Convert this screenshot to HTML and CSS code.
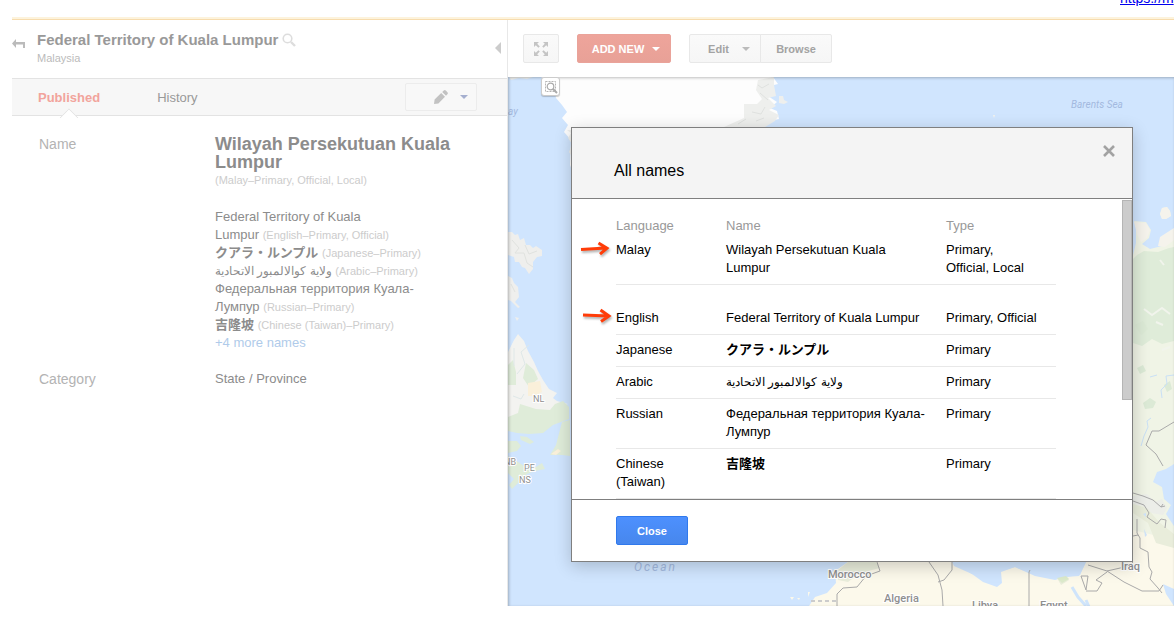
FILE: index.html
```html
<!DOCTYPE html>
<html lang="en">
  <head>
    <meta charset="utf-8">
    <title>Federal Territory of Kuala Lumpur</title>
    <link rel="stylesheet" href="styles.css">
  </head>
  <body>
    <div class="top-strip">
      <a href="#">https://m</a>
    </div>

    <div class="app">
      <aside class="sidebar">
        <div class="place-header">
          <button class="icon-btn back" aria-label="Back">
            <svg width="14" height="12" viewBox="0 0 14 12"><path d="M0 5.500L4 1v3h9v6h-2V6.500H4V10z" fill="#bbb" /></svg>
          </button>
          <div class="place-title">
            <h1>
              Federal Territory of Kuala Lumpur
              <svg width="14" height="14" viewBox="0 0 14 14"><circle cx="5.500" cy="5.500" r="4.300" fill="none" stroke="#ddd" stroke-width="1.600" /><path d="M9 9l4 4" stroke="#ddd" stroke-width="2.400" /></svg>
            </h1>
            <p>Malaysia</p>
          </div>
          <button class="icon-btn collapse" aria-label="Collapse panel">
            <svg width="6" height="12" viewBox="0 0 6 12"><path d="M6 0v12L0 6z" fill="#ccc" /></svg>
          </button>
        </div>

        <nav class="tabs">
          <a class="tab active" href="#">Published</a>
          <a class="tab" href="#">History</a>
          <button class="edit-menu" aria-label="Edit place">
            <svg width="14" height="14" viewBox="0 0 14 14"><path d="M0 14l.6-4.400L7.200 3l3.800 3.800L4.400 13.400zM8.200 2L9.800.6q1-1 2 0L13.400 2.200q1 1 0 2L12 5.800z" fill="#c2c2c2" /></svg>
            <span class="caret blue"></span>
          </button>
        </nav>

        <dl class="details">
          <dt>Name</dt>
          <dd>
            <h2>Wilayah Persekutuan Kuala Lumpur</h2>
            <p class="primary-note"><small>(Malay–Primary, Official, Local)</small></p>
            <ul>
              <li>Federal Territory of Kuala Lumpur&nbsp;<small>(English–Primary, Official)</small></li>
              <li><span class="cjk" lang="ja">クアラ・ルンプル</span> <small>(Japanese–Primary)</small></li>
              <li><span class="arabic" lang="ar">ولاية كوالالمبور الاتحادية</span> <small>(Arabic–Primary)</small></li>
              <li>Федеральная территория Куала-Лумпур&nbsp;<small>(Russian–Primary)</small></li>
              <li><span class="cjk" lang="zh-TW">吉隆坡</span> <small>(Chinese (Taiwan)–Primary)</small></li>
            </ul>
            <a href="#">+4 more names</a>
          </dd>
          <dt>Category</dt>
          <dd>State / Province</dd>
        </dl>
      </aside>

      <main class="map-pane">
        <div class="toolbar">
          <button class="btn square" aria-label="Full screen">
            <svg width="14" height="14" viewBox="0 0 14 14"><path d="M0 0h5L3.200 1.800 5.800 4.400 4.400 5.800 1.800 3.200 0 5zM14 0v5l-1.800-1.800L9.600 5.800 8.200 4.400l2.600-2.600L9 0zM0 14V9l1.800 1.800L4.400 8.200l1.400 1.400-2.600 2.600L5 14zM14 14H9l1.800-1.800L8.200 9.600l1.400-1.400 2.600 2.600L14 9z" fill="#c4c4c4" /></svg>
          </button>
          <button class="btn add">ADD NEW <span class="caret"></span></button>
          <div class="btn-group">
            <button class="btn">Edit <span class="caret"></span></button>
            <button class="btn">Browse</button>
          </div>
        </div>

        <div class="map">
          <svg class="map-art" viewBox="508 77 666 529" preserveAspectRatio="xMinYMin slice">
            <rect x="508" y="77" width="666" height="529" fill="#d0e5fe" />

            <!-- Greenland -->
            <path d="M541 77L553 85 556 98 562 105 567 112 562 118 568 125 564 132 571 140 570 165 574 175H640L700 135 735 130 744 125 752 128 763 127 770 121 779 119 777 111 770 108 777 102 768 96 774 91 770 86 778 84 773 77z" fill="#fdfdfd" />
            <path d="M758 80L774 77 774 85 776 96 768 98 776 106 769 110 779 115 775 121 765 127H724L744 118V104H757L762 99 756 90zM779 96l4 0 1 4 4 2-4 2-5-1z" fill="#eeefed" />
            <path d="M758 85l4 3 7-4M760 93l8 7M752 112l9 2 4-7M738 124l8-5M756 121l8-3" fill="none" stroke="#dfe1df" />
            <path d="M509 77h24l-6 2-8-1-8 2zM567 130l4 3-3 5 4 6-3 8 5 8-1 14 2 4V130z" fill="#eeefed" />

            <!-- Baffin and Labrador -->
            <path d="M508 232l4 0 3 3 3-1 2 6 4-2 2 7 4 0 3 3 3-2 6 4 0 6-5 1-4 5 0 7-4 5-4-6-3-1-3-5-4 0-1-5-6-2zM508 276l4 2 2 5 4 4 1 10-4 5 5 5-2 1-7-7-3-1zM515 317l4 1-2 3z" fill="#efefed" />
            <path d="M512 240l7 8-4 5 9 0 3 10 6 4M525 245l4 9 8-3M511 284l4 8" fill="none" stroke="#e0e2df" />
            <path d="M508 352L514 340 518 334 524 341 528 351 534 362 538 371 543 380 549 389 557 393 553 398 557 401 568 404 560 407 565 410 549 414 536 413 528 422 508 427z" fill="#f3f3f0" />
            <path d="M508 365l5-5 3 12 0 13-8 0zM526 363l8 7 4 9-6 5 -3 3-6-9zM520 404l16 5 14 1 5-6 8-3 6 6 0 12-16 6-10 8-14 1-12-1-9-2v-14l10-4zM508 441l9 0 4 5-4 5-9 2zM520 436l7 1 7 5-4 2-9-4zM562 422l8-2v36l-8-1-12 0 6-10zM508 456l10 6 9 6 9-1 6-4 3 6-10 2-8 3-9 9-6 6-3-4 5-6-6-6z" fill="#dfecd9" />
            <path d="M528 383l12-2 2 11-8 4-6 0zM551 454l7-5 3 2-5 4z" fill="#faf0da" />
            <path d="M513 396l8 3 3-5M529 345l-8 7 4 12-8 10M514 348v18" fill="none" stroke="#dfe8e8" />

            <!-- Northern Russia down to the Caspian -->
            <path d="M1134 221l12 1 5 8-2 8-7 6 8 5 12-3-1-6 13-9V606H1133V255l3-12 0-16zM1160 214l2-6 5-1 3 4 1 5-5 3-4 0z" fill="#f0f4e6" />
            <path d="M1134 222l12 1 4 7-3 8-6 4-4-8zM1158 246l2-9 14-9v12l-9 7zM1160 214l2-6 5-1 3 4 1 5-5 3-4 0zM993 115l2 0-1 3z" fill="#f5f3ec" />
            <path d="M1137 255l7-4 14 1 11-4 5-1v94l-12 3-10-5-10 7-9-3V259z" fill="#dfecd9" />
            <path d="M1144 309l8 6 10-7 8 6M1156 322l7 3M1160 260l4 5M1162 350l8-3" fill="none" stroke="#f1f4ec" stroke-width="2" />
            <path d="M1135 325l8-4 5 8-7 6zM1143 403l7-5 6 4-3 6-8 1zM1137 368l6-3 3 6-6 3zM1164 385l6-4 2 8-5 3z" fill="#dcead6" />
            <path d="M1141 446l3-10 4-9-1-6 4-3M1162 398l-1-8 6-6-1-8 8-1M1150 377l7-2" fill="none" stroke="#c9e0f6" />
            <path d="M1174 464l-8 5-9 3-4 10 9 5 2 12 7 6-5 9 8 12z" fill="#d0e5fe" />
            <path d="M1133 496l14-2 8 8 7-3 5 9-4 7-12-2-10-8-8 2z" fill="#eceee9" />

            <!-- North Africa and the Middle East -->
            <path d="M809 606l6-9 12-4 9-10-1-12 13-9H952L972 574 999 584 1001 571 1015 567 1035 576 1055 580 1065 577 1080 575 1086 562 1133 530 1174 540V606z" fill="#fcf9eb" />
            <path d="M838 570l10-8h28l4 6-20 5-12 9-10-2zM1057 578l9-2 3 4-8 5zM1133 504l14 4 12 14 15 12v14l-18-5-8-20-15-10z" fill="#e9eddb" />
            <path d="M952 562h134l-1 2-6 12-14 1-10 2-20-4-20-8-14 5 1 11-5 4-14-5-11-8-18-8z" fill="#d0e5fe" />
            <path d="M1057 578l9-2 3 3-7 4z" fill="#dceacb" />
            <path d="M1072 587l6 10 8 9M1086 600l3 7" fill="none" stroke="#cfe4fb" stroke-width="3" />
            <path d="M1163 584l11 5v17l-8-12z" fill="#d0e5fe" />
            <path d="M790 597l4 0-2 3zM797 598l3 0-1 2zM808 592l2 0-2 5z" fill="#fcf9eb" />
            <path d="M1144 529l3 6-2 2zM1143 514l3-1 0 4z" fill="#cfe4fb" />
            <g fill="none" stroke="#aaa">
              <path d="M877 562l3 9-14 5-9 11-14 1-6 6v12M929 562l9 13 4 15 1 16M938 582l6-2 8-10v-8M1029 606v-34l1-2M1133 493l10 3 10 4 8 7 4-1M1133 501l11 4 5 8-2 4 10 7 4-5 5 1-1 8M1137 519v14l3 5 0 10 8 4 1 15 3 5-2 7 8 9 4 5M1088 565l19 6 22-5 4-4M1107 571l17 11 18 9h17l4-6M1081 576l5 14 2-14zM1086 591h11l5-8-6-3 11-8M1174 422l-15 9-7 0-6 14 10 9 7 12M1133 536l5-1M1161 507l2-3" />
              <path d="M811 601h25" stroke="#ccc" stroke-width="2" stroke-dasharray="4 3" />
            </g>

            <g class="sea">
              <text x="508" y="115">ay</text>
              <text x="1071" y="108">Barents Sea</text>
              <text class="ocean" x="634" y="571">Ocean</text>
            </g>
            <g class="province">
              <text x="533" y="402">NL</text>
              <text x="504" y="465">NB</text>
              <text x="524" y="471">PE</text>
              <text x="519" y="483">NS</text>
            </g>
            <g class="country">
              <text x="828" y="578">Morocco</text>
              <text x="884" y="602">Algeria</text>
              <text x="972" y="609">Libya</text>
              <text x="1040" y="609">Egypt</text>
              <text x="1121" y="570">Iraq</text>
            </g>
          </svg>
          <button class="map-zoom" aria-label="Zoom to area">
            <svg width="14" height="14" viewBox="0 0 14 14"><path d="M1.500 1.500h10v10h-10z" fill="none" stroke="#b5b5b5" stroke-dasharray="2 1" /><circle cx="6.500" cy="6.500" r="3.300" fill="#fff" stroke="#aaa" stroke-width="1.200" /><path d="M9 9l4 4" stroke="#aaa" stroke-width="2" /></svg>
          </button>
        </div>
      </main>

      <section class="modal" role="dialog" aria-labelledby="modalTitle">
        <header class="modal-header">
          <h2 id="modalTitle">All names</h2>
          <button class="modal-x" aria-label="Close dialog">
            <svg width="12" height="12" viewBox="0 0 12 12"><path d="M1 1l10 10M11 1L1 11" stroke="#a2a2a2" stroke-width="2.600" /></svg>
          </button>
        </header>
        <div class="modal-body">
          <table>
            <thead>
              <tr><th class="lang">Language</th><th class="name">Name</th><th>Type</th></tr>
            </thead>
            <tbody>
              <tr>
                <td>
                  <svg class="pointer" width="30" height="18" viewBox="0 0 30 18"><path d="M1 9.500L26 8M18.500 3L27 8.200 20 14.200" fill="none" stroke="#ff3c08" stroke-width="3" /></svg>
                  Malay
                </td>
                <td>Wilayah Persekutuan Kuala Lumpur</td>
                <td>Primary,<br>Official, Local</td>
              </tr>
              <tr class="spaced">
                <td>
                  <svg class="pointer second" width="30" height="18" viewBox="0 0 30 18"><path d="M1 8L26 9M18.500 3L27 9 19 14.500" fill="none" stroke="#ff3c08" stroke-width="3" /></svg>
                  English
                </td>
                <td>Federal Territory of Kuala Lumpur</td>
                <td>Primary, Official</td>
              </tr>
              <tr>
                <td>Japanese</td>
                <td><span class="cjk" lang="ja">クアラ・ルンプル</span></td>
                <td>Primary</td>
              </tr>
              <tr>
                <td>Arabic</td>
                <td><span class="arabic" lang="ar">ولاية كوالالمبور الاتحادية</span></td>
                <td>Primary</td>
              </tr>
              <tr>
                <td>Russian</td>
                <td>Федеральная территория Куала-Лумпур</td>
                <td>Primary</td>
              </tr>
              <tr>
                <td>Chinese (Taiwan)</td>
                <td><span class="cjk" lang="zh-TW">吉隆坡</span></td>
                <td>Primary</td>
              </tr>
            </tbody>
          </table>
          <div class="scroll-thumb"></div>
        </div>
        <footer class="modal-footer">
          <button class="btn close">Close</button>
        </footer>
      </section>
    </div>
  </body>
</html>
```
FILE: styles.css
```css
* {
  box-sizing: border-box;
}
body {
  margin: 0;
  padding-left: 12px;
  background: #fff;
  font-family: "Liberation Sans", "Noto Sans CJK JP", sans-serif;
  font-size: 13px;
  line-height: 18px;
  color: #000;
}
h1,
h2,
p,
ul,
dl,
dd {
  margin: 0;
  padding: 0;
}
ul {
  list-style: none;
}
button {
  font-family: inherit;
  cursor: pointer;
}
.top-strip {
  display: flex;
  justify-content: flex-end;
  align-items: flex-end;
  height: 17px;
  padding-bottom: 10px;
  overflow: hidden;
  font-size: 14px;
}
.top-strip a {
  width: 54px;
  white-space: nowrap;
  color: #0000ee;
}
.app {
  position: relative;
  display: flex;
  min-height: calc(100vh - 43px);
  border-top: 1px solid #f7dcae;
  box-shadow: 0 -2px 0 #fdf3dc;
  margin-top: 2px;
}

/* left panel */
.sidebar {
  width: 496px;
  flex-shrink: 0;
  border-right: 1px solid #e8e8e8;
}
.place-header {
  display: flex;
  align-items: flex-start;
  height: 58px;
  padding: 11px 6px 0 0;
}
.icon-btn {
  display: flex;
  padding: 0;
  border: 0;
  background: none;
}
.back {
  width: 25px;
  margin-top: 7px;
}
.collapse {
  margin: 11px 0 0 auto;
}
.place-title h1 {
  display: flex;
  align-items: center;
  gap: 4px;
  font-size: 15px;
  line-height: 18px;
  color: #999;
}
.place-title p {
  font-size: 11px;
  color: #bbb;
}
.tabs {
  display: flex;
  align-items: center;
  height: 38px;
  padding: 0 30px 0 26px;
  background: #f7f7f7;
  border-top: 1px solid #e3e3e3;
  border-bottom: 1px solid #e3e3e3;
}
.tab {
  position: relative;
  margin-right: 57px;
  padding-top: 1px;
  color: #999;
  text-decoration: none;
}
.tab.active {
  font-weight: bold;
  color: #f2a49c;
}
.tab.active::after {
  content: "";
  position: absolute;
  left: 50%;
  top: 23px;
  width: 13px;
  height: 13px;
  margin-left: -7px;
  background: #fff;
  border: 1px solid #e3e3e3;
  border-right: 0;
  border-bottom: 0;
  transform: rotate(45deg);
  clip-path: polygon(0 0, 100% 0, 0 100%);
}
.edit-menu {
  display: flex;
  align-items: center;
  gap: 12px;
  width: 72px;
  height: 28px;
  margin-left: auto;
  padding: 0 0 0 28px;
  background: #f8f8f8;
  border: 1px solid #ececec;
  border-radius: 2px;
}
.caret {
  border: 4px solid transparent;
  border-top-color: currentColor;
  border-bottom: 0;
}
.caret.blue {
  color: #a5afcf;
}
.details {
  display: grid;
  grid-template-columns: 176px 250px;
  row-gap: 18px;
  padding: 19px 0 0 27px;
  color: #8c8c8c;
}
.details dt {
  font-size: 14px;
  color: #b3b3b3;
}
.details h2 {
  font-size: 18px;
  line-height: 18px;
}
.primary-note {
  margin-bottom: 19px;
}
.details small {
  font-size: 11px;
  line-height: 16px;
  color: #ccc;
  white-space: nowrap;
}
.details li {
  min-height: 18px;
}
.details a {
  color: #b0cbea;
  text-decoration: none;
}
.cjk {
  font-family: "Noto Sans CJK JP", sans-serif;
  font-weight: bold;
  line-height: 16px;
}
.arabic {
  font-size: 12px;
  line-height: 16px;
}

/* map side */
.map-pane {
  display: flex;
  flex-direction: column;
  flex: 1;
  min-width: 0;
}
.toolbar {
  display: flex;
  align-items: center;
  gap: 18px;
  height: 57px;
  padding-left: 15px;
}
.btn {
  display: flex;
  align-items: center;
  justify-content: center;
  gap: 10px;
  height: 29px;
  padding: 0 10px;
  background: linear-gradient(#fafafa, #f6f6f6);
  border: 1px solid #e8e8e8;
  border-radius: 2px;
  font-size: 11px;
  font-weight: bold;
  white-space: nowrap;
  color: #a3a3a3;
}
.btn.square {
  width: 36px;
}
.btn.add {
  width: 94px;
  padding-left: 14px;
  gap: 8px;
  background: linear-gradient(#eea49b, #e8a197);
  border-color: #eaa39a;
  color: #fff;
}
.btn-group {
  display: flex;
}
.btn-group .btn {
  width: 72px;
}
.btn-group .btn:first-child {
  gap: 13px;
  padding-left: 18px;
  border-radius: 2px 0 0 2px;
}
.btn-group .btn:last-child {
  margin-left: -1px;
  border-radius: 0 2px 2px 0;
}
.btn-group .caret {
  color: #bbb;
}
.map {
  position: relative;
  flex: 1;
  overflow: hidden;
  background: #d0e5fe;
}
.map::after {
  content: "";
  position: absolute;
  inset: 0;
  box-shadow: inset 1px 1px 3px rgba(0, 0, 0, 0.25);
  pointer-events: none;
}
.map-art {
  position: absolute;
  width: 100%;
  height: 100%;
  font-family: Roboto, sans-serif;
}
.sea {
  font-size: 10px;
  font-style: italic;
  fill: #a3b9df;
}
.ocean {
  font-size: 12px;
  letter-spacing: 2px;
}
.province {
  font-size: 9px;
  fill: #8f8f8f;
  stroke: #fff;
  stroke-width: 2px;
  paint-order: stroke;
}
.country {
  font-size: 11px;
  font-weight: 500;
  fill: #8f8f8f;
  stroke: #fff;
  stroke-width: 2px;
  paint-order: stroke;
}
.map-zoom {
  position: absolute;
  z-index: 1;
  left: 33px;
  top: 0;
  display: flex;
  align-items: center;
  justify-content: center;
  width: 19px;
  height: 19px;
  padding: 0;
  background: #fff;
  border: 1px solid #ccc;
  border-radius: 3px;
  box-shadow: 0 1px 1px rgba(0, 0, 0, 0.2);
}

/* dialog */
.modal {
  position: absolute;
  z-index: 2;
  left: 559px;
  top: 107px;
  width: 562px;
  background: #fff;
  border: 1px solid #7f7f7f;
  box-shadow: 0 4px 16px rgba(0, 0, 0, 0.2);
}
.modal-header {
  display: flex;
  justify-content: space-between;
  align-items: flex-start;
  height: 71px;
  padding: 17px 17px 0 42px;
  background: #f4f4f4;
  border-bottom: 1px solid #7f7f7f;
}
.modal-header h2 {
  margin-top: 17px;
  font-size: 16px;
  font-weight: normal;
}
.modal-x {
  display: flex;
  padding: 0;
  border: 0;
  background: none;
}
.modal-body {
  position: relative;
  padding: 18px 44px 0;
}
table {
  width: 440px;
  table-layout: fixed;
  border-collapse: collapse;
}
th {
  padding: 0;
  font-weight: normal;
  text-align: left;
  color: #999;
}
.lang {
  width: 110px;
}
.name {
  width: 220px;
}
td {
  position: relative;
  padding: 6px 0 7px;
  vertical-align: top;
  border-bottom: 1px solid #e8e8e8;
}
td:first-child {
  padding-right: 30px;
}
td:nth-child(2) {
  padding-right: 20px;
}
.spaced td {
  padding-top: 24px;
}
.pointer {
  position: absolute;
  left: -36px;
  top: 5px;
  filter: drop-shadow(1px 2px 1px rgba(0, 0, 0, 0.3));
}
.pointer.second {
  left: -34px;
  top: 22px;
}
.scroll-thumb {
  position: absolute;
  right: 0;
  top: 1px;
  width: 10px;
  height: 200px;
  background: #ccc;
  border: 1px solid #b5b5b5;
}
.modal-footer {
  padding: 16px 44px;
  border-top: 1px solid #7f7f7f;
}
.btn.close {
  width: 72px;
  background: linear-gradient(#4d90fe, #4787ed);
  border-color: #3079ed;
  color: #fff;
}
```
